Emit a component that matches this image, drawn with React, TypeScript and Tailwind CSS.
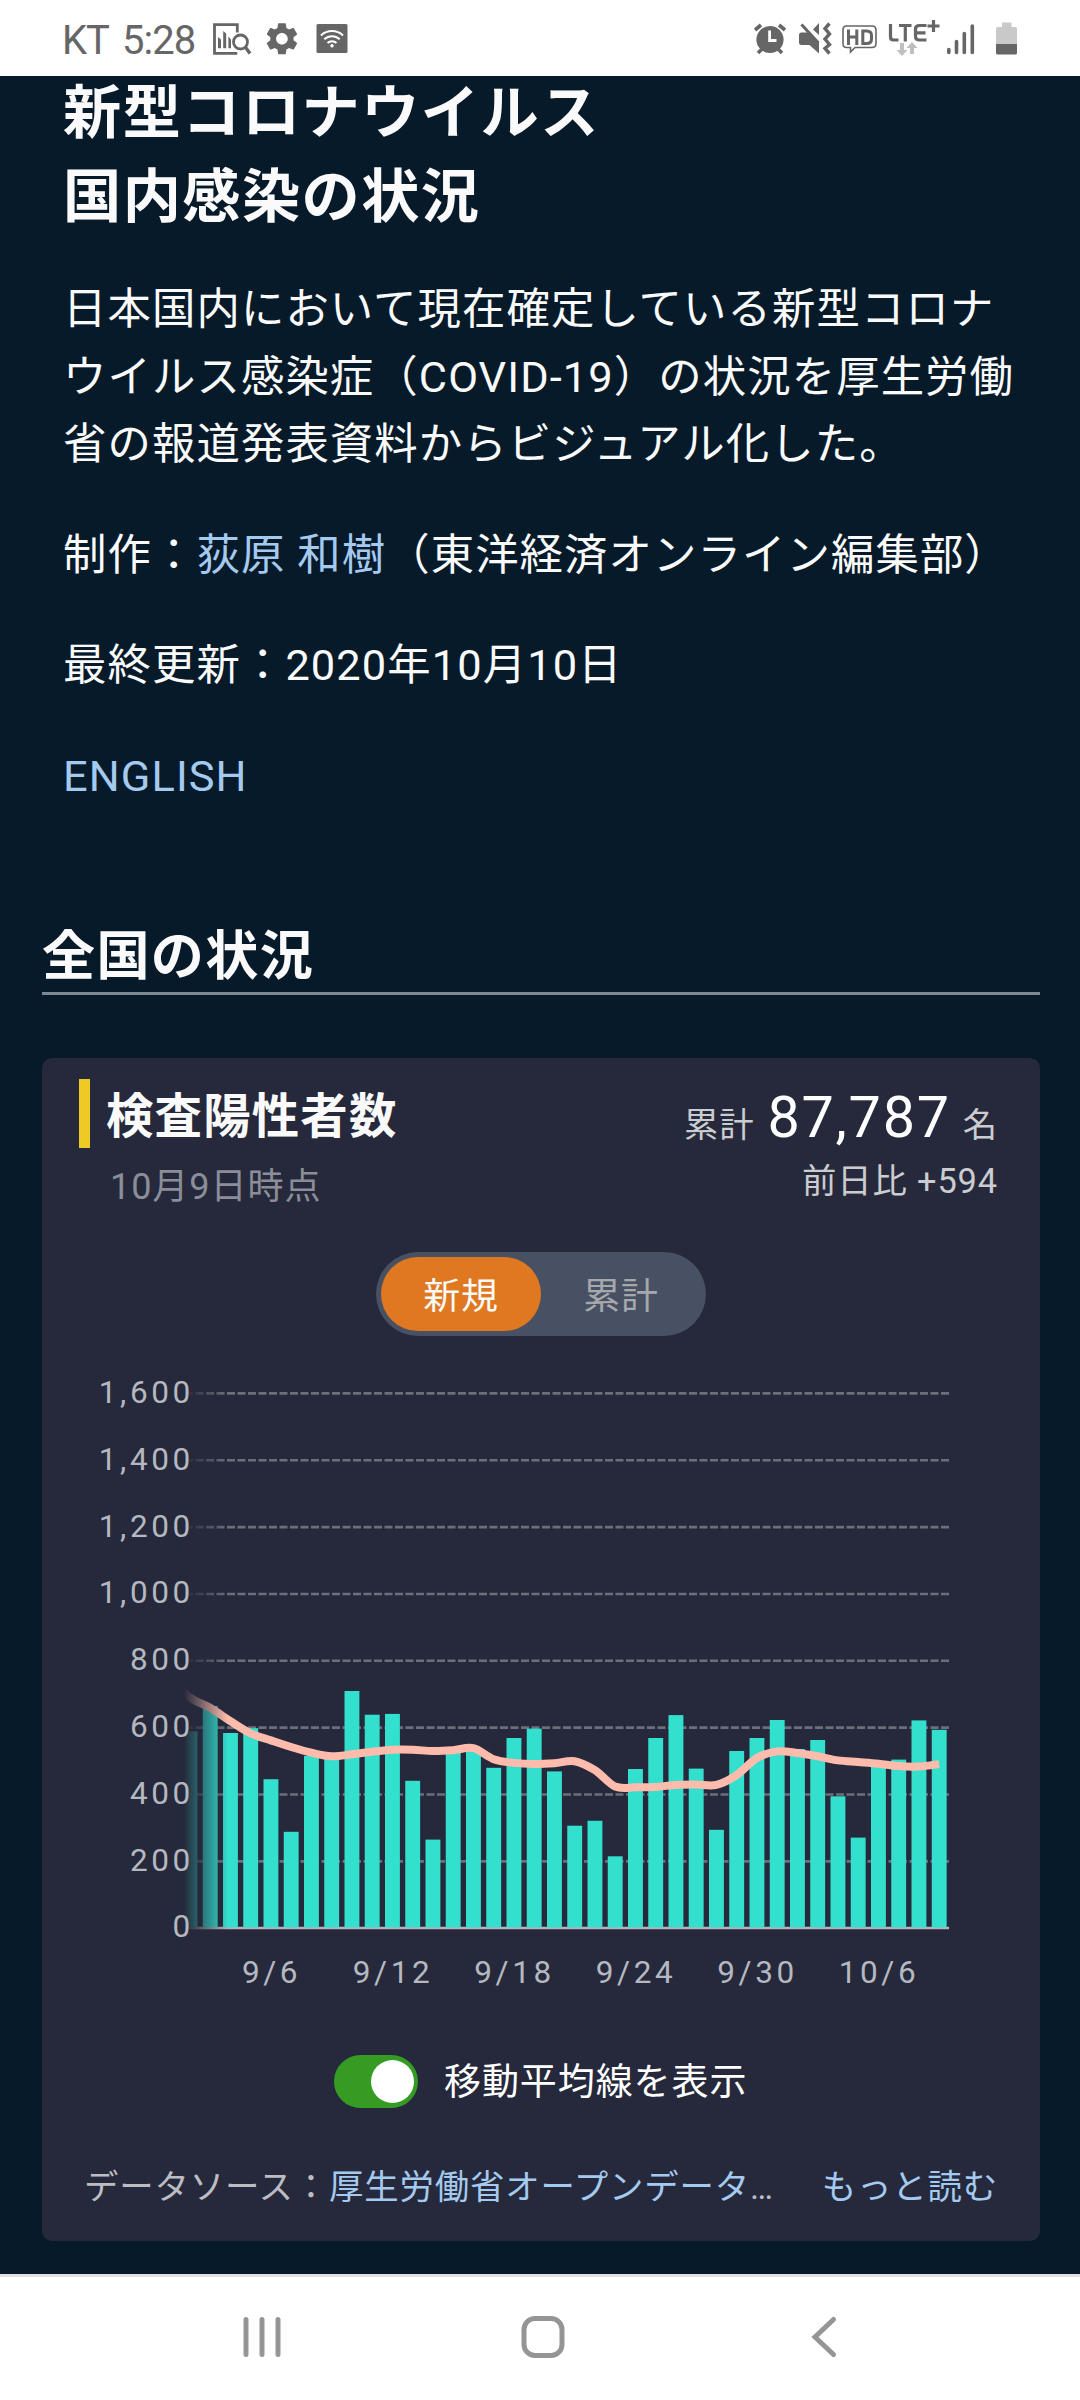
import React from "react";

const BAR_TOPS = [
  1731.4, 1706, 1733, 1728.2, 1779.2, 1831.8, 1756, 1759, 1691, 1714.7, 1713.9, 1780.8, 1839.6, 1753, 1751, 1767.8,
  1738, 1728.6, 1771.4, 1825.7, 1820.8, 1856.3, 1769, 1738, 1715.1, 1768.6, 1829.8, 1751, 1738, 1720, 1749, 1740,
  1796.3, 1837.6, 1765, 1759.6, 1720.4, 1729.8,
];
// Starts one day before the first bar so the line enters from the left edge.
const LINE_Y = [
  1678, 1697.5, 1707.8, 1721.2, 1733.5, 1740.4, 1747, 1752.7, 1756.3, 1754.3, 1751.8, 1749.8, 1749.8, 1751, 1750.2,
  1748.2, 1759.2, 1762.9, 1764.1, 1763.3, 1761.2, 1770.2, 1786.5, 1787.3, 1786.9, 1784.9, 1784.5, 1784.9, 1775.1,
  1758, 1751.4, 1753, 1756.3, 1760.4, 1762, 1763.7, 1766.1, 1766.5, 1764.1,
];
const X_LABELS = ["9/6", "9/12", "9/18", "9/24", "9/30", "10/6"];
const Y_LABELS = ["1,600", "1,400", "1,200", "1,000", "800", "600", "400", "200", "0"];

const ORIGIN_X = 60;
const ORIGIN_Y = 1360;
const PITCH = 20.25;
const barX = (i: number) => 223 - ORIGIN_X + (i - 2) * PITCH;

function smoothPath() {
  const pts = LINE_Y.map((y, i) => [barX(i - 1) + 7.4, y - ORIGIN_Y]);
  let d = `M${pts[0][0]} ${pts[0][1]}`;
  for (let i = 0; i < pts.length - 1; i++) {
    const p0 = pts[Math.max(0, i - 1)];
    const p1 = pts[i];
    const p2 = pts[i + 1];
    const p3 = pts[Math.min(pts.length - 1, i + 2)];
    d += `C${p1[0] + (p2[0] - p0[0]) / 6} ${p1[1] + (p2[1] - p0[1]) / 6} ${p2[0] - (p3[0] - p1[0]) / 6} ${
      p2[1] - (p3[1] - p1[1]) / 6
    } ${p2[0]} ${p2[1]}`;
  }
  return d;
}

function Chart() {
  return (
    <svg width="960" height="640" viewBox="0 0 960 640" className="-ml-px block">
      <defs>
        <linearGradient id="fade" x1="124" x2="168" y1="0" y2="0" gradientUnits="userSpaceOnUse">
          <stop offset="0" stopColor="#25293b" />
          <stop offset="1" stopColor="#25293b" stopOpacity="0" />
        </linearGradient>
        <clipPath id="plot">
          <rect x="124" y="0" width="800" height="600" />
        </clipPath>
      </defs>
      <g clipPath="url(#plot)">
        {Y_LABELS.slice(0, 8).map((l, i) => (
          <line
            key={l}
            x1="889"
            x2="120"
            y1={33.4 + i * 66.85}
            y2={33.4 + i * 66.85}
            stroke="#6b6e7b"
            strokeWidth="2.6"
            strokeDasharray="8 2.5"
          />
        ))}
        <line x1="120" x2="889" y1="568" y2="568" stroke="#b3b4bb" strokeWidth="2.6" />
        {BAR_TOPS.map((t, i) => (
          <rect key={i} x={barX(i)} y={t - ORIGIN_Y} width="14.9" height={1927.4 - t} fill="#33dfcd" />
        ))}
        <path d={smoothPath()} fill="none" stroke="#ffbcac" strokeWidth="8" />
        <rect x="120" y="0" width="48" height="590" fill="url(#fade)" />
      </g>
      <g fill="#b6b8c0" fontSize="31.5" letterSpacing="3.6" fontFamily="Roboto, sans-serif">
        {Y_LABELS.map((l, i) => (
          <text key={l} x="133.800" y={43 + i * 66.8} textAnchor="end">
            {l}
          </text>
        ))}
        {X_LABELS.map((l, i) => (
          <text key={l} x={211.5 + i * PITCH * 6} y="623.300" textAnchor="middle">
            {l}
          </text>
        ))}
      </g>
    </svg>
  );
}

function StatusBar() {
  return (
    <header className="flex h-[76px] items-center bg-white px-[62px] font-[Roboto] text-[40px] leading-none text-[#666]">
      <span className="w-[60px] pt-[5px] tracking-[-1px]">KT</span>
      <span className="w-[88px] pt-[5px] tracking-[-1px]">5:28</span>
      <svg width="140" height="44" viewBox="210 16 140 44" fill="none" stroke="#666">
        <path d="M237.300 32.500V24.700H214.500V53.300H237.300" strokeWidth="2.800" />
        <path d="M218 48.300V37l3 2.500v8.800zM223.200 48.300V31l3 2.500v14.800zM228.400 48.300V36.500l2.600 3v8.800z" fill="#666" stroke="none" />
        <circle cx="240.500" cy="42" r="7" strokeWidth="2.800" />
        <path d="M245.300 47L250 53.500" strokeWidth="3.400" />
        <g transform="translate(262.500 19.300) scale(1.620)" fill="#666" stroke="none">
          <path d="M19.14 12.94c.04-.3.06-.61.06-.94 0-.32-.02-.64-.07-.94l2.03-1.58c.18-.14.23-.41.12-.61l-1.92-3.32c-.12-.22-.37-.29-.59-.22l-2.39.96c-.5-.38-1.03-.7-1.62-.94l-.36-2.54c-.04-.24-.24-.41-.48-.41h-3.84c-.24 0-.43.17-.47.41l-.36 2.54c-.59.24-1.13.57-1.62.94l-2.39-.96c-.22-.08-.47 0-.59.22L2.74 8.87c-.12.21-.08.47.12.61l2.03 1.58c-.05.3-.09.63-.09.94s.02.64.07.94l-2.03 1.58c-.18.14-.23.41-.12.61l1.92 3.32c.12.22.37.29.59.22l2.39-.96c.5.38 1.03.7 1.62.94l.36 2.54c.05.24.24.41.48.41h3.84c.24 0 .44-.17.47-.41l.36-2.54c.59-.24 1.13-.56 1.62-.94l2.39.96c.22.08.47 0 .59-.22l1.92-3.32c.12-.22.07-.47-.12-.61l-2.01-1.58zM12 15.6c-1.98 0-3.6-1.62-3.6-3.6s1.62-3.6 3.6-3.6 3.6 1.62 3.6 3.6-1.62 3.6-3.6 3.6z" />
        </g>
        <rect x="316.500" y="24" width="31" height="29" rx="1.500" fill="#666" stroke="none" />
        <g stroke="#fff" strokeWidth="2">
          <path d="M321 35.500a16 16 0 0 1 22 0M324.300 39.300a11 11 0 0 1 15.400 0M327.500 43a6.400 6.400 0 0 1 9 0" />
          <circle cx="332" cy="45.800" r="1.300" fill="#fff" strokeWidth="1" />
        </g>
      </svg>
      <svg width="272" height="44" viewBox="750 16 272 44" className="ml-auto -mr-[4px]" fill="#666">
        <circle cx="770" cy="39.500" r="13.600" />
        <path d="M755 30L761 25M785 30L779 25M758 53L762 49M782 53L778 49" stroke="#666" strokeWidth="3.600" />
        <path d="M769.600 30.500V40.500H776.500" stroke="#fff" strokeWidth="2.800" fill="none" />
        <path d="M799 35q0-2.500 2.500-2.500h6L819 43v10.500l-9.500-8.500h-8q-2.500 0-2.500-2.500zM813 29.500l6-6.500v12z" />
        <path d="M801.500 24.500L818.500 43" stroke="#666" strokeWidth="3" />
        <path
          d="M829.500 23.500l-4.500 5 4.500 5.500-4.500 5 4.500 5.500-4.500 4 4.500 5"
          stroke="#666"
          strokeWidth="3.400"
          fill="none"
        />
        <path
          d="M846.500 26h25.500q4 0 4 4v13.500q0 4-4 4h-17l-4.500 4.500v-4.500h-4q-3.500 0-3.500-4V30q0-4 3.500-4z"
          stroke="#666"
          strokeWidth="1.600"
          fill="none"
        />
        <path
          d="M848.500 29.500v15.500M856.800 29.500v15.500M848.500 37h8M862.800 31h4q4.700 0 4.700 4.500v3.500q0 4.500-4.700 4.500h-4z"
          stroke="#666"
          strokeWidth="3"
          fill="none"
        />
        <path
          d="M890.500 24v13q0 3 3 3h5M899 25.500h12.500M905.300 25.500v16M926.500 25.500h-7q-4 0-4 3.500v7.500q0 3.500 4 3.500h7M915.500 32.800h10M927.500 26h12M933.500 20v12"
          stroke="#666"
          strokeWidth="3.200"
          fill="none"
        />
        <path
          d="M900 43h4v7h3.500l-5.500 6-5.500-6h3.500zM910 54h4v-6h3.500l-5.500-6-5.500 6h3.500z"
          fill="#bfbfbf"
        />
        <path
          d="M948.800 49.500v3M956.500 41.500v11M964.300 33.500v19M972.300 26v26.500"
          stroke="#666"
          strokeWidth="3.600"
          strokeLinecap="round"
        />
        <path d="M996 44V28.500q0-1.500 1.500-1.500h4.500v-4.500h9.500v4.500h4q1.500 0 1.500 1.500V44z" fill="#c9c9c9" />
        <path d="M996 44h21v9q0 1.500-1.500 1.500h-18q-1.500 0-1.500-1.500z" />
      </svg>
    </header>
  );
}

export default function App() {
  return (
    <div className="flex h-[2400px] w-[1080px] flex-col overflow-hidden bg-[#061a2a] font-['Roboto','Noto_Sans_CJK_JP',sans-serif] text-[#fafafa]">
      <StatusBar />
      <main className="flex flex-1 flex-col pr-[40px] pl-[42px]">
        <section className="-mt-[5px] flex flex-col gap-[43px] whitespace-nowrap px-[21px] text-[43.4px] leading-[67.6px] tracking-[0.025em]">
          <h1 className="-mb-[6px] text-[58.2px] leading-[84px] font-bold tracking-[0.025em]">
            新型コロナウイルス
            <br />
            国内感染の状況
          </h1>
          <p>
            日本国内において現在確定している新型コロナ
            <br />
            ウイルス感染症（COVID-19）の状況を厚生労働
            <br />
            省の報道発表資料からビジュアル化した。
          </p>
          <p>
            制作：<a className="text-[#a5caf0]">荻原 和樹</a>（東洋経済オンライン編集部）
          </p>
          <p>最終更新：2020年10月10日</p>
          <p>
            <a className="text-[#a5caf0]">ENGLISH</a>
          </p>
        </section>
        <h2 className="mt-[104.4px] h-[80px] border-b-[3px] border-[#7d8993] text-[53.1px] leading-[85px] font-bold tracking-[0.025em]">
          全国の状況
        </h2>
        <section className="mt-[63px] flex h-[1183px] w-[998px] flex-col rounded-[10px] bg-[#25293b]">
          <div className="flex h-[153px] justify-between pt-[21px] pr-[42px] pl-[37px]">
            <div>
              <h3 className="h-[69px] border-l-[11px] border-[#eecb24] pl-[16px] text-[47.4px] leading-[76px] font-bold tracking-[0.025em]">
                検査陽性者数
              </h3>
              <p className="pl-[31px] text-[36.1px] leading-[79px] tracking-[0.025em] text-[#8b8e99]">10月9日時点</p>
            </div>
            <div className="flex flex-col text-right text-[34.4px] tracking-[0.025em] text-[#cbccd0]">
              <p className="flex h-[69px] items-baseline justify-end leading-[78px]">
                累計
                <span className="mr-[12px] ml-[13px] text-[57.5px] tracking-[0.03em] text-white">87,787</span>名
              </p>
              <p className="leading-[66px]">前日比 +594</p>
            </div>
          </div>
          <div className="mt-[41px] ml-[334px] flex h-[84px] w-[330px] items-center rounded-full bg-[#485163] p-[5px] text-center text-[36.9px] leading-[80px] tracking-[0.025em]">
            <span className="h-[74px] w-[160px] rounded-full bg-[#df7820]">新規</span>
            <span className="h-[74px] flex-1 text-[#a6a8ac]">累計</span>
          </div>
          <div className="mt-[24px] h-[640px] pl-[19px]">
            <Chart />
          </div>
          <div className="mt-[55px] ml-[292px] flex h-[53px] items-center text-[37px] tracking-[0.025em] text-white">
            <span className="mr-[26px] flex h-[53px] w-[84px] items-center justify-end rounded-full bg-[#359b23] pr-[4px]">
              <span className="h-[43px] w-[43px] rounded-full bg-white" />
            </span>
            <span className="pt-[3px]">移動平均線を表示</span>
          </div>
          <div className="mt-[55px] flex justify-between pr-[42px] pl-[42px] text-[34.4px] leading-[49px] tracking-[0.025em] whitespace-nowrap text-[#bcbdc3]">
            <p>
              データソース：<a className="text-[#a5caf0]">厚生労働省オープンデータ</a>…
            </p>
            <a className="text-[#a5caf0]">もっと読む</a>
          </div>
        </section>
      </main>
      <nav className="flex h-[126px] border-t-[3px] border-[#e0e0e2] bg-white">
        <svg width="1080" height="123" viewBox="0 2277 1080 123" fill="none" stroke="#959595">
          <path
            d="M246 2319.500v35M262 2319.500v35M278 2319.500v35"
            strokeWidth="5"
            strokeLinecap="round"
          />
          <rect x="524" y="2318.500" width="38" height="37" rx="11" strokeWidth="5" />
          <path d="M833.500 2319.500L815 2337l18.500 17.500" strokeWidth="5" strokeLinecap="round" />
        </svg>
      </nav>
    </div>
  );
}
